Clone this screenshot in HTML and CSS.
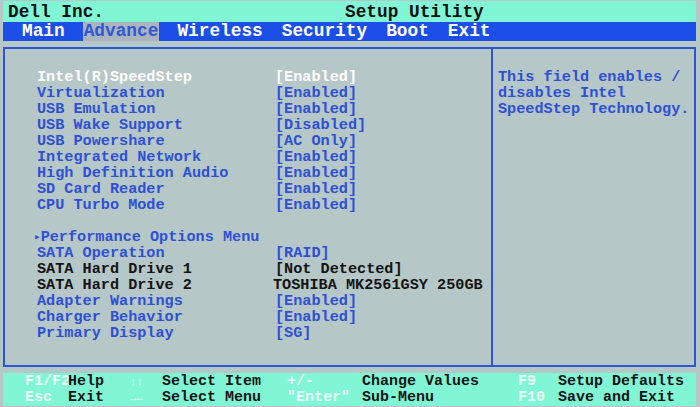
FILE: index.html
```html
<!doctype html>
<html lang="en">
<head>
  <meta charset="utf-8">
  <title>Setup Utility</title>
  <link rel="stylesheet" href="styles.css">
</head>
<body>
  <div class="screen">
    <div class="title">
      <span class="brand">Dell Inc.</span>
      <span>Setup Utility</span>
    </div>
    <div class="menu">
      <span class="tab">Main</span>
      <span class="tab active">Advance</span>
      <span class="tab">Wireless</span>
      <span class="tab">Security</span>
      <span class="tab">Boot</span>
      <span class="tab">Exit</span>
    </div>

    <div class="box">
      <div class="pane">
        <div class="rows">
          <span class="sel">Intel(R)SpeedStep</span><span class="sel">[Enabled]</span>
          <span>Virtualization</span><span>[Enabled]</span>
          <span>USB Emulation</span><span>[Enabled]</span>
          <span>USB Wake Support</span><span>[Disabled]</span>
          <span>USB Powershare</span><span>[AC Only]</span>
          <span>Integrated Network</span><span>[Enabled]</span>
          <span>High Definition Audio</span><span>[Enabled]</span>
          <span>SD Card Reader</span><span>[Enabled]</span>
          <span>CPU Turbo Mode</span><span>[Enabled]</span>
          <span class="blank">&nbsp;</span><span></span>
          <span class="sub"><span class="tri">&#9656;</span>Performance Options Menu</span><span></span>
          <span>SATA Operation</span><span>[RAID]</span>
          <span class="info">SATA Hard Drive 1</span><span class="info">[Not Detected]</span>
          <span class="info">SATA Hard Drive 2</span><span class="info drive">TOSHIBA MK2561GSY 250GB</span>
          <span>Adapter Warnings</span><span>[Enabled]</span>
          <span>Charger Behavior</span><span>[Enabled]</span>
          <span>Primary Display</span><span>[SG]</span>
        </div>
      </div>
      <div class="help">
        This field enables /<br>
        disables Intel<br>
        SpeedStep Technology.
      </div>
    </div>

    <div class="footer">
      <span class="key">F1/F2</span><span>Help</span>
      <span class="key arrows">&#8593;&#8595;</span><span>Select Item</span>
      <span class="key">+/-</span><span>Change Values</span>
      <span class="key">F9</span><span>Setup Defaults</span>
      <span class="key">Esc</span><span>Exit</span>
      <span class="key arrows">&#8594;&#8592;</span><span>Select Menu</span>
      <span class="key">"Enter"</span><span>Sub-Menu</span>
      <span class="key">F10</span><span>Save and Exit</span>
    </div>
  </div>
</body>
</html>
```

FILE: styles.css
```css
body{margin:0;background:#b6c7c7;font-family:"Liberation Mono","Courier New",monospace;font-weight:bold}
.screen{width:693px;height:407px;padding:1px 4px 0 3px;display:flex;flex-direction:column}
.title{height:21px;background:#80f6d4;color:#111;font-size:17.8px;line-height:22px;display:flex;padding-left:5px}
.brand{width:337px}
.menu{height:19px;background:#1c4ee8;color:#fff;font-size:17.8px;line-height:19px;display:flex;gap:17px;padding-left:18px}
.tab{padding:0 1px}
.tab.active{background:#aab4bf;color:#3156d6}
.box{margin-top:6px;height:316px;border:2px solid #3055d4;display:flex}
.pane{width:454px;border-right:2px solid #3055d4;padding:20px 0 0 32px}
.rows{display:grid;grid-template-columns:238px auto;font-size:15.2px;line-height:16px;color:#2e50d6}
.rows .sel{color:#fff}
.rows .info{color:#141414}
.rows .drive{margin-left:-2px}
.sub{margin-left:-3px}
.tri{font-size:11px;vertical-align:1px}
.help{padding:20px 0 0 5px;font-size:15.2px;line-height:16px;color:#2e50d6}
.footer{margin-top:6px;height:33px;background:#80f6d4;color:#141414;font-size:15px;line-height:16px;display:grid;grid-template-columns:43px 62px 32px 125px 75px 156px 40px auto;padding:1px 0 0 22px;box-sizing:border-box}
.key{color:#eafff8}
.arrows{font-size:11px}
```
